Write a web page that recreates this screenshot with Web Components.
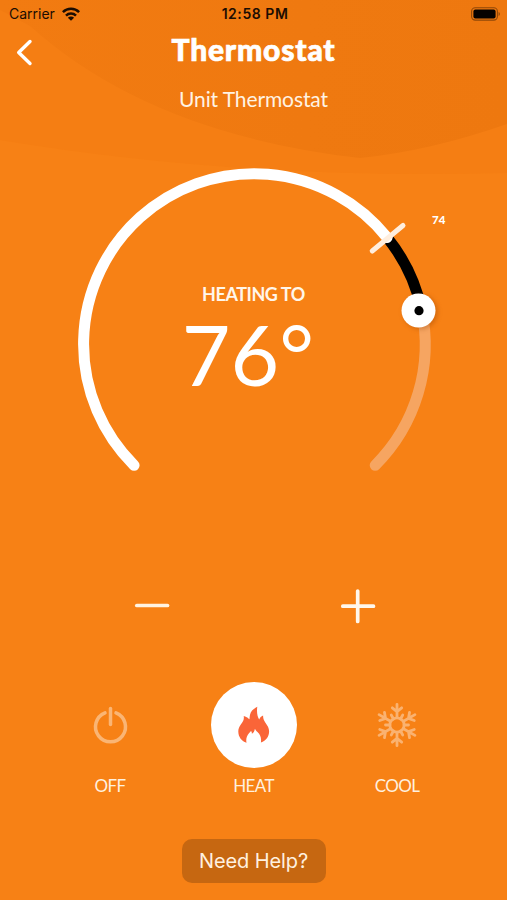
<!DOCTYPE html>
<html lang="en">
<head>
<meta charset="utf-8">
<title>Thermostat</title>
<style>
  body {
    margin: 0;
  }
</style>
</head>
<body>
<thermostat-app></thermostat-app>

<script>
class StatusBar extends HTMLElement {
  constructor() {
    super();

    this.attachShadow({ mode: 'open' });

    this.shadowRoot.innerHTML = `
      <style>
        :host {
          display: grid;
          grid-template-columns: 1fr auto 1fr;
          align-items: center;
          height: 28px;
          padding: 0 6px 0 9px;
          color: #1c0d02;
          font: 14px/28px Inter, sans-serif;
        }

        .carrier {
          display: flex;
          align-items: center;
          gap: 7px;
        }

        .time {
          font-weight: 600;
          letter-spacing: 0.55px;
        }

        .battery {
          justify-self: end;
        }

        svg {
          display: block;
          margin-top: -1px;
        }
      </style>

      <div class="carrier">
        <span>Carrier</span>
        <svg width="18" height="14" viewBox="0 0 18 14">
          <g fill="none" stroke="#1c0d02" stroke-width="2.5">
            <path d="M.9 5.2a11.5 11.5 0 0 1 16.2 0"/>
            <path d="M4 8.6a7.1 7.1 0 0 1 10 0"/>
          </g>
          <path d="M9 13.8 5.9 10.7a4.4 4.4 0 0 1 6.2 0z" fill="#1c0d02"/>
        </svg>
      </div>
      <span class="time">12:58 PM</span>
      <svg class="battery" width="30" height="14" viewBox="0 0 30 14">
        <rect x=".6" y=".8" width="25.8" height="12.3" rx="3.6" fill="none" stroke="#1c0d02" stroke-opacity=".45" stroke-width="1.1"/>
        <rect x="2.4" y="2.5" width="22.2" height="8.9" rx="2" fill="#060200"/>
        <path d="M27.6 4.9a2.4 2.4 0 0 1 0 4.2z" fill="#1c0d02" fill-opacity=".5"/>
      </svg>
    `;
  }
}

class PageHeader extends HTMLElement {
  constructor() {
    super();

    this.attachShadow({ mode: 'open' });

    this.shadowRoot.innerHTML = `
      <style>
        :host {
          display: grid;
          grid-template-columns: 48px 1fr 48px;
          height: 90px;
          text-align: center;
        }

        svg {
          display: block;
          margin: 10px 0 0 14px;
        }

        h1 {
          margin: 3px 0 0;
          font-size: 30px;
          font-weight: 900;
          line-height: 36px;
          letter-spacing: 0.8px;
          -webkit-text-stroke: 0.7px #fff;
        }

        p {
          margin: 19px 0 0;
          font-size: 21px;
          line-height: 26px;
          letter-spacing: -0.1px;
          color: #fff3e4;
        }
      </style>

      <svg width="20" height="28" viewBox="0 0 20 28">
        <path d="M16 3.500 4.700 14.500l11.300 11" fill="none" stroke="#fff" stroke-width="3.400" stroke-linecap="round" stroke-linejoin="round"/>
      </svg>
      <div>
        <h1><slot></slot></h1>
        <p><slot name="unit"></slot></p>
      </div>
    `;
  }
}

class TemperatureDial extends HTMLElement {
  constructor() {
    super();

    this.attachShadow({ mode: 'open' });

    this.shadowRoot.innerHTML = `
      <style>
        :host {
          display: grid;
          justify-items: center;
          width: 388px;
          height: 340px;
          margin: 38px auto 0;
        }

        svg {
          grid-area: 1 / 1;
          overflow: visible;
        }

        .reading {
          grid-area: 1 / 1;
          padding-top: 127px;
          text-align: center;
        }

        .label {
          font-size: 18px;
          font-weight: 700;
          line-height: 22px;
          letter-spacing: -0.45px;
          color: #fff6ea;
        }

        .value {
          margin-top: -1px;
          padding-right: 11px;
          font-size: 84px;
          line-height: 100px;
        }

        .current {
          position: absolute;
          left: 432px;
          top: 213px;
          font-size: 11.5px;
          font-weight: 900;
          line-height: 14px;
        }
      </style>

      <svg width="388" height="340" viewBox="59.500 156 388 340" fill="none" stroke-width="11" stroke-linecap="round">
        <path d="M421 309.300A170.500 170.500 0 0 1 374.700 465.300" stroke="#f6a561"/>
        <path d="M386.600 237.500A170.500 170.500 0 0 1 421 309.300" stroke="#000" stroke-linecap="butt"/>
        <path d="M133.600 465.300A170.500 170.500 0 1 1 386.600 237.500" stroke="#fff"/>
        <path d="M371.700 251 402.500 225.500" stroke="#ffeede" stroke-width="5"/>
        <circle cx="420" cy="312" r="17.500" fill="#8a3900" fill-opacity=".3" style="filter: blur(2px)"/>
        <circle cx="418" cy="310.500" r="17" fill="#fff"/>
        <circle cx="418.500" cy="310.700" r="4.600" fill="#000"/>
      </svg>
      <div class="reading">
        <div class="label"><slot></slot></div>
        <div class="value"><slot name="target"></slot></div>
      </div>
      <span class="current"><slot name="current"></slot></span>
    `;
  }
}

class StepControls extends HTMLElement {
  constructor() {
    super();

    this.attachShadow({ mode: 'open' });

    this.shadowRoot.innerHTML = `
      <style>
        :host {
          display: flex;
          justify-content: space-between;
          width: 242px;
          margin: 91px 0 0 134px;
        }

        svg {
          display: block;
        }
      </style>

      <svg width="36" height="38" viewBox="0 0 36 38">
        <path d="M2.800 18.500H33.500" stroke="#fff3e2" stroke-width="3.700" stroke-linecap="round"/>
      </svg>
      <svg width="36" height="38" viewBox="0 0 36 38">
        <path d="M2.800 19.200H33.500M17.700 4V34.500" stroke="#fff7ec" stroke-width="3.700" stroke-linecap="round"/>
      </svg>
    `;
  }
}

const modeIcons = {
  off: `
    <g fill="none" stroke="#fab574" stroke-width="3.500" stroke-linecap="round">
      <path d="M20 12.800A15 15 0 1 0 31 12.800"/>
      <path d="M25.500 8.500V24.500"/>
    </g>`,
  heat: `
    <path d="M28.300 6.800C24.500 8.500 21.800 11.200 21 14.700c-.3 1.600-.4 2.800-.5 4.600-1.200-.7-1.500-2-5.800-3.300.6 3.200-.5 5.200-2.700 8.200-1.700 2.300-2.700 4.500-2.700 7.100 0 5.700 3 9.500 8.200 11.500-.8-4.200.4-7 2.500-9.500.8-.9 1.500-1.500 2-2.200.6.500.9 1.500.9 2.700 1.500-.8 2.600-2.300 3-5 .9 1.300 1.200 2 2.600 3.300 3 3 4 6 3.400 10.500 5.200-2 8.200-6 8.200-11.400 0-3.400-1.700-5.400-3.500-8.200-1.600-2.500-2.600-4.500-2.500-7.500-1.800.9-3.300 2-3.900 4.100-1.800-3.200-2.700-7-1.900-12.800z" fill="#fa6538"/>`,
  cool: `
    <defs>
      <path id="arm" d="M25 17.500V4.300M20.300 7.800l4.700 3.900 4.700-3.900"/>
      <path id="spur" d="M25 18V13.500"/>
    </defs>
    <g fill="none" stroke="#fab270" stroke-width="2.800" stroke-linecap="round" stroke-linejoin="round">
      <use href="#arm"/>
      <use href="#arm" transform="rotate(60 25 25)"/>
      <use href="#arm" transform="rotate(120 25 25)"/>
      <use href="#arm" transform="rotate(180 25 25)"/>
      <use href="#arm" transform="rotate(240 25 25)"/>
      <use href="#arm" transform="rotate(300 25 25)"/>
      <use href="#spur" transform="rotate(30 25 25)"/>
      <use href="#spur" transform="rotate(90 25 25)"/>
      <use href="#spur" transform="rotate(150 25 25)"/>
      <use href="#spur" transform="rotate(210 25 25)"/>
      <use href="#spur" transform="rotate(270 25 25)"/>
      <use href="#spur" transform="rotate(330 25 25)"/>
      <circle cx="25" cy="25" r="7.200"/>
    </g>`
};

class ModeButton extends HTMLElement {
  constructor() {
    super();

    this.attachShadow({ mode: 'open' });
  }

  connectedCallback() {
    this.shadowRoot.innerHTML = `
      <style>
        :host {
          display: flex;
          flex-direction: column;
          align-items: center;
          width: 86px;
          font-size: 17px;
          line-height: 22px;
          letter-spacing: -0.6px;
          color: #fff0df;
        }

        .disc {
          display: grid;
          place-items: center;
          width: 86px;
          height: 86px;
          margin-bottom: 7px;
          border-radius: 50%;
        }

        :host([active]) .disc {
          background: #fff;
        }
      </style>

      <div class="disc">
        <svg width="50" height="50" viewBox="0 0 50 50">${modeIcons[this.getAttribute('mode')]}</svg>
      </div>
      <span><slot></slot></span>
    `;
  }
}

class HelpButton extends HTMLElement {
  constructor() {
    super();

    this.attachShadow({ mode: 'open' });

    this.shadowRoot.innerHTML = `
      <style>
        :host {
          display: block;
          width: 144px;
          height: 44px;
          margin: 42px auto 0;
          border-radius: 10px;
          background: #c66711;
          color: #fff1e0;
          font: 20px/45px Inter, sans-serif;
          letter-spacing: -0.1px;
          text-align: center;
        }
      </style>

      <slot></slot>
    `;
  }
}

class ThermostatApp extends HTMLElement {
  constructor() {
    super();

    this.attachShadow({ mode: 'open' });

    this.shadowRoot.innerHTML = `
      <style>
        :host {
          display: block;
          position: relative;
          width: 507px;
          height: 900px;
          overflow: hidden;
          background: #f78115;
          color: #fff;
          font-family: Lato, sans-serif;
        }

        .waves {
          position: absolute;
          top: 0;
          left: 0;
        }

        main {
          position: relative;
        }

        .modes {
          display: flex;
          justify-content: space-between;
          width: 373px;
          margin: 57px auto 0;
        }
      </style>

      <svg class="waves" width="507" height="180" viewBox="0 0 507 180">
        <defs>
          <linearGradient id="shade">
            <stop offset="0" stop-color="#f27b11"/>
            <stop offset=".6" stop-color="#ef7910"/>
            <stop offset="1" stop-color="#ee780f"/>
          </linearGradient>
        </defs>
        <path d="M0 0H507V173Q240 180 0 140z" fill="#f57e13"/>
        <path d="M0 0H507V124Q430 151 360 158Q150 134 30 26L0 10z" fill="url(#shade)"/>
      </svg>
      <main>
        <status-bar></status-bar>
        <page-header>Thermostat<span slot="unit">Unit Thermostat</span></page-header>
        <temperature-dial>HEATING TO<span slot="target">76°</span><span slot="current">74</span></temperature-dial>
        <step-controls></step-controls>
        <div class="modes">
          <mode-button mode="off">OFF</mode-button>
          <mode-button mode="heat" active>HEAT</mode-button>
          <mode-button mode="cool">COOL</mode-button>
        </div>
        <help-button>Need Help?</help-button>
      </main>
    `;
  }
}

customElements.define('status-bar', StatusBar);
customElements.define('page-header', PageHeader);
customElements.define('temperature-dial', TemperatureDial);
customElements.define('step-controls', StepControls);
customElements.define('mode-button', ModeButton);
customElements.define('help-button', HelpButton);
customElements.define('thermostat-app', ThermostatApp);
</script>
</body>
</html>
